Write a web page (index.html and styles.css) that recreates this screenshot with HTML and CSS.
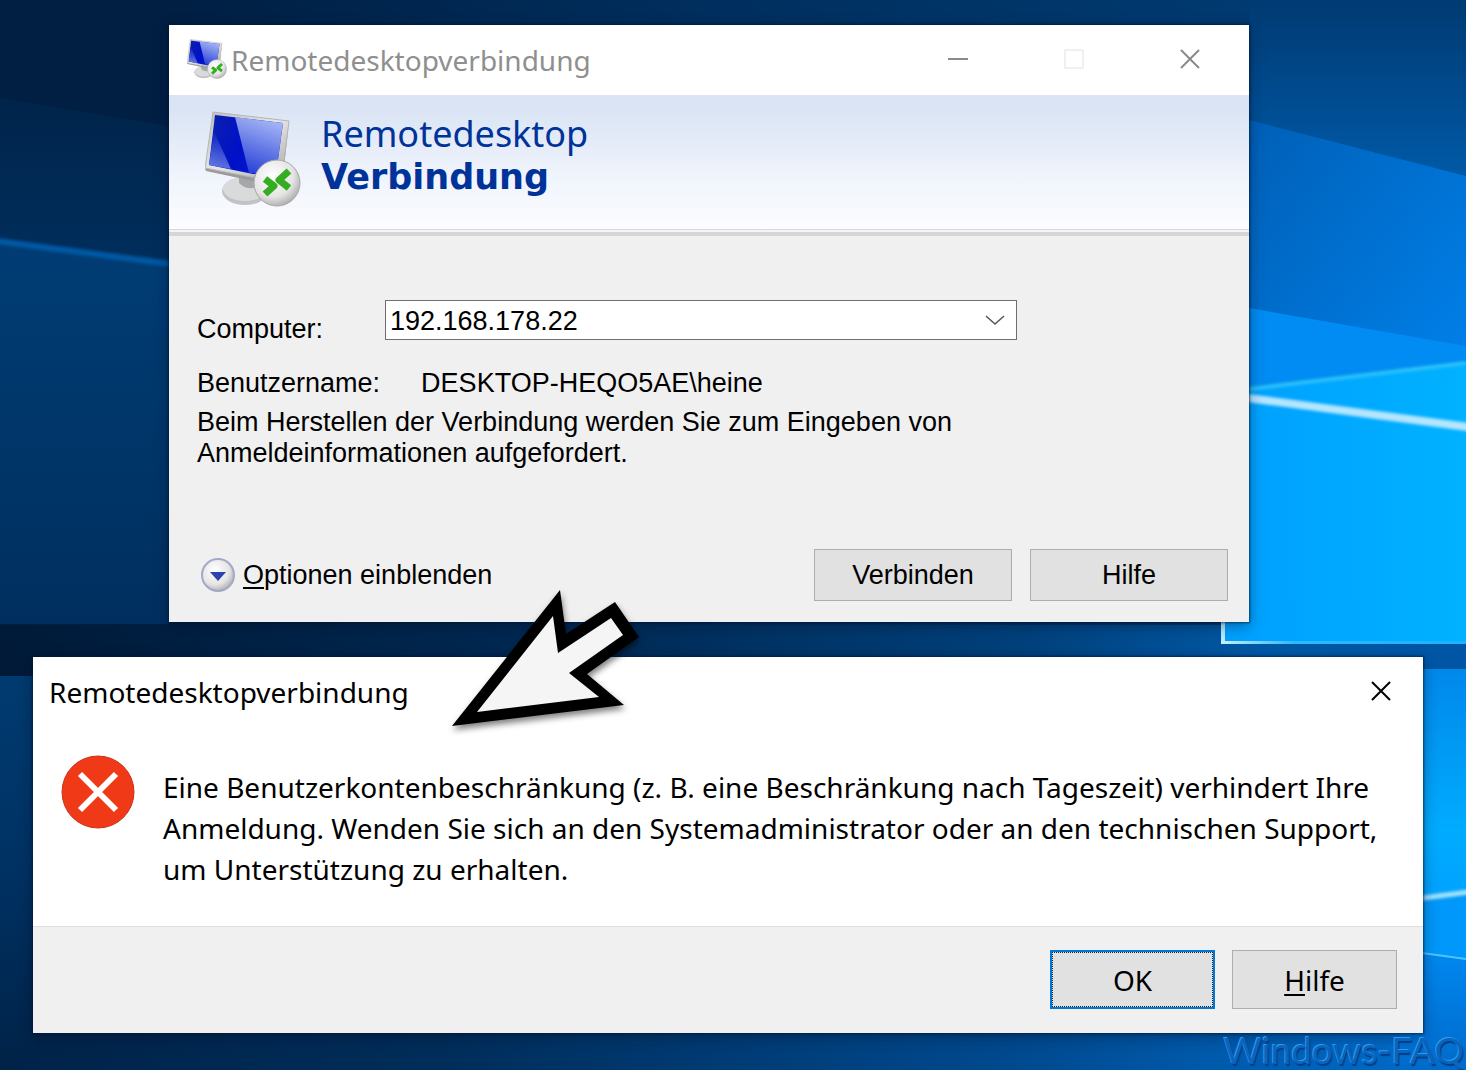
FILE: index.html
```html
<!DOCTYPE html>
<html lang="de">

<head>
  <meta charset="UTF-8">
  <meta name="viewport" content="width=device-width, initial-scale=1.0">
  <title>Remotedesktopverbindung</title>
  <link rel="stylesheet" href="styles.css">
</head>

<body>
  <!-- desktop wallpaper -->
  <svg class="wallpaper" viewBox="0 0 1466 1070" preserveAspectRatio="none" aria-hidden="true">
    <defs>
      <filter id="soft" x="-10%" y="-50%" width="120%" height="200%">
        <feGaussianBlur stdDeviation="1.5" />
      </filter>
      <linearGradient id="sky" x1="0" y1="0" x2="1" y2="0">
        <stop offset="0" stop-color="#001f42" />
        <stop offset="0.12" stop-color="#001f43" />
        <stop offset="0.5" stop-color="#002f5f" />
        <stop offset="0.85" stop-color="#003a70" />
        <stop offset="1" stop-color="#004584" />
      </linearGradient>
      <linearGradient id="leftHaze" x1="0" y1="0" x2="0" y2="1">
        <stop offset="0" stop-color="#00244b" />
        <stop offset="1" stop-color="#002e5c" />
      </linearGradient>
      <linearGradient id="leftGlow" x1="0" y1="0" x2="0" y2="1">
        <stop offset="0" stop-color="#003d74" />
        <stop offset="1" stop-color="#002f5f" />
      </linearGradient>
      <linearGradient id="rightSky" x1="0" y1="0" x2="0" y2="1">
        <stop offset="0" stop-color="#003a72" />
        <stop offset="1" stop-color="#005cab" />
      </linearGradient>
      <linearGradient id="rightGlow" x1="0" y1="0" x2="1" y2="1">
        <stop offset="0" stop-color="#005fb6" />
        <stop offset="1" stop-color="#0082ec" />
      </linearGradient>
      <linearGradient id="pane" x1="0" y1="0" x2="1" y2="0">
        <stop offset="0" stop-color="#009fff" />
        <stop offset="1" stop-color="#00b2ff" />
      </linearGradient>
      <linearGradient id="paneEdge" x1="0" y1="0" x2="1" y2="0">
        <stop offset="0" stop-color="#c8f0ff" />
        <stop offset="0.3" stop-color="#2fb8ff" />
        <stop offset="1" stop-color="#1cb2ff" />
      </linearGradient>
      <linearGradient id="band" x1="0" y1="0" x2="1" y2="0">
        <stop offset="0" stop-color="#001a38" />
        <stop offset="0.4" stop-color="#002a55" />
        <stop offset="0.7" stop-color="#00417c" />
        <stop offset="0.86" stop-color="#0059a6" />
        <stop offset="1" stop-color="#0056a4" />
      </linearGradient>
      <linearGradient id="floor" x1="0" y1="0" x2="1" y2="0">
        <stop offset="0" stop-color="#002348" />
        <stop offset="0.3" stop-color="#002d5a" />
        <stop offset="0.7" stop-color="#004a90" />
        <stop offset="1" stop-color="#006fd0" />
      </linearGradient>
      <linearGradient id="floorLeft" x1="0" y1="0" x2="0" y2="1">
        <stop offset="0" stop-color="#003b70" />
        <stop offset="0.5" stop-color="#003264" />
        <stop offset="1" stop-color="#00244a" />
      </linearGradient>
      <linearGradient id="paneLow" x1="0" y1="0" x2="0" y2="1">
        <stop offset="0" stop-color="#0088ea" />
        <stop offset="0.7" stop-color="#00acff" />
        <stop offset="1" stop-color="#00a2ff" />
      </linearGradient>
      <linearGradient id="floorRight" x1="0" y1="0" x2="0" y2="1">
        <stop offset="0" stop-color="#0088f0" />
        <stop offset="1" stop-color="#006aca" />
      </linearGradient>
    </defs>
    <rect width="1466" height="1070" fill="url(#sky)" />
    <path d="M0 98 L169 126 V262 L0 240 Z" fill="url(#leftHaze)" />
    <path d="M0 240 L169 264 V624 H0 Z" fill="url(#leftGlow)" />
    <path d="M-10 240 L179 265" stroke="#0059a4" stroke-width="6" filter="url(#soft)" />
    <rect x="1249" width="217" height="190" fill="url(#rightSky)" />
    <path d="M1249 120 L1466 176 V370 L1249 392 Z" fill="url(#rightGlow)" />
    <path d="M1249 308 L1466 346 V370 L1249 392 Z" fill="#008cf2" />
    <path d="M1220 392 L1466 362 V642 H1222 Z" fill="url(#pane)" />
    <path d="M1249 389 L1466 363" stroke="#2cc0fa" stroke-width="4" filter="url(#soft)" />
    <path d="M1240 397 L1476 428" stroke="#b4e6ff" stroke-width="8" filter="url(#soft)" />
    <rect y="625" width="1466" height="52" fill="url(#band)" />
    <rect x="1222" y="600" width="244" height="42" fill="url(#pane)" />
    <path d="M1223 600 V642" stroke="#b8ecff" stroke-width="4" />
    <rect x="1221" y="641" width="245" height="3" fill="url(#paneEdge)" />
    <rect y="676" width="1466" height="394" fill="url(#floor)" />
    <rect y="676" width="34" height="374" fill="url(#floorLeft)" />
    <path d="M1400 669 H1466 V892 L1400 900 Z" fill="url(#paneLow)" />
    <path d="M1400 898 L1466 892 V959 L1400 950 Z" fill="#0098fa" />
    <path d="M1400 950 L1466 959 V1070 H1400 Z" fill="url(#floorRight)" />
    <path d="M1400 901 L1476 891" stroke="#a4e4ff" stroke-width="5" filter="url(#soft)" />
    <path d="M1400 950 L1466 959" stroke="#4cc4ff" stroke-width="2" />
  </svg>

  <!-- monitor with the connection badge, used twice -->
  <svg class="symbols" aria-hidden="true">
    <defs>
      <linearGradient id="screen" x1="0" y1="0.3" x2="1" y2="0.6">
        <stop offset="0" stop-color="#0a1fb0" />
        <stop offset="0.45" stop-color="#0010c8" />
        <stop offset="1" stop-color="#0a1ed0" />
      </linearGradient>
      <linearGradient id="shine" x1="0.7" y1="0" x2="0.4" y2="1">
        <stop offset="0" stop-color="#a9b9f6" />
        <stop offset="1" stop-color="#2a42d8" />
      </linearGradient>
      <linearGradient id="corner" x1="0.2" y1="0" x2="0" y2="1">
        <stop offset="0" stop-color="#0a20c4" />
        <stop offset="1" stop-color="#6a80e4" />
      </linearGradient>
      <linearGradient id="frame" x1="0" y1="0" x2="1" y2="1">
        <stop offset="0" stop-color="#bcbcbc" />
        <stop offset="0.5" stop-color="#e6e6e6" />
        <stop offset="1" stop-color="#a8a8a8" />
      </linearGradient>
      <radialGradient id="ball" cx="0.4" cy="0.35" r="0.7">
        <stop offset="0" stop-color="#ffffff" />
        <stop offset="0.65" stop-color="#e4e4e4" />
        <stop offset="1" stop-color="#a9a9a9" />
      </radialGradient>
      <symbol id="monitor" viewBox="0 0 96 96">
        <ellipse cx="40" cy="80" rx="23" ry="14" fill="#c0c2c4" />
        <ellipse cx="40" cy="78" rx="22" ry="12" fill="#d8dadb" />
        <path d="M34 60 L52 64 L52 76 Q42 80 34 72 Z" fill="#a5a7a9" />
        <path d="M84 10 L76 60 L46 66 L0 57 L1 60 L48 70 L78 66 Z" fill="#9a9a9a" />
        <path d="M8 1 L84 10 L77 66 L46 66 L0 57 Z" fill="url(#frame)" stroke="#b5b5b5" />
        <path d="M10 4 L78 12 L71 63 L48 63 L4 54 Z" fill="url(#screen)" />
        <path d="M30 6 L78 12 L71 63 L44 62 Z" fill="url(#shine)" />
        <path d="M9 20 L26 58 L4 54 Z" fill="url(#corner)" />
        <circle cx="72" cy="72" r="23" fill="url(#ball)" stroke="#a8a8a8" stroke-width="1" />
        <path d="M60 68 L69 75 L60 83" fill="none" stroke="#35ad22" stroke-width="7" stroke-linejoin="round" />
        <path d="M84 60 L74 69 L84 77" fill="none" stroke="#35ad22" stroke-width="7" stroke-linejoin="round" />
      </symbol>
    </defs>
  </svg>

  <main class="desktop">
    <section class="window rdpWindow">
      <header class="titleBar">
        <svg class="titleIcon" aria-hidden="true"><use href="#monitor" /></svg>
        <h1 class="titleText">Remotedesktopverbindung</h1>
        <div class="windowControls">
          <button class="controlBtn" type="button" aria-label="Minimieren">
            <svg width="20" height="20"><path d="M0 10 H20" stroke="#8a8a8a" stroke-width="2" /></svg>
          </button>
          <button class="controlBtn" type="button" aria-label="Maximieren" disabled>
            <svg width="20" height="20"><rect x="1" y="1" width="18" height="18" fill="none" stroke="#e2e2e2" stroke-width="1" /></svg>
          </button>
          <button class="controlBtn" type="button" aria-label="Schließen">
            <svg width="20" height="20"><path d="M1 1 L19 19 M19 1 L1 19" stroke="#8a8a8a" stroke-width="2" /></svg>
          </button>
        </div>
      </header>

      <div class="banner">
        <svg class="bannerIcon" aria-hidden="true"><use href="#monitor" /></svg>
        <p class="bannerText">Remotedesktop<br><strong>Verbindung</strong></p>
      </div>

      <form class="rdpForm">
        <div class="computerRow">
          <label for="computer">Computer:</label>
          <div class="comboBox">
            <select id="computer" name="computer">
              <option>192.168.178.22</option>
            </select>
            <svg class="comboArrow" width="20" height="12"><path d="M1 2 L10 10 L19 2" fill="none" stroke="#555" stroke-width="1.5" /></svg>
          </div>
        </div>
        <div class="userRow">
          <span>Benutzername:</span>
          <span>DESKTOP-HEQO5AE\heine</span>
        </div>
        <p class="hint">Beim Herstellen der Verbindung werden Sie zum Eingeben von<br>Anmeldeinformationen aufgefordert.</p>

        <div class="rdpActions">
          <button class="optionsBtn" type="button">
            <svg width="36" height="36" viewBox="0 0 36 36" aria-hidden="true">
              <circle cx="18" cy="18" r="16" fill="url(#ball)" stroke="#a3a9c6" stroke-width="2" />
              <path d="M10 15 H26 L18 24 Z" fill="#2c42ae" />
            </svg>
            <span><u>O</u>ptionen einblenden</span>
          </button>
          <button class="btn" type="button">Verbinden</button>
          <button class="btn" type="button">Hilfe</button>
        </div>
      </form>
    </section>

    <section class="window errorWindow" role="alertdialog" aria-labelledby="errorTitle">
      <header class="errorTitleBar">
        <h2 class="titleText" id="errorTitle">Remotedesktopverbindung</h2>
        <button class="controlBtn" type="button" aria-label="Schließen">
          <svg width="20" height="20"><path d="M1 1 L19 19 M19 1 L1 19" stroke="#000" stroke-width="2" /></svg>
        </button>
      </header>
      <div class="errorBody">
        <svg class="errorIcon" viewBox="0 0 74 74" aria-hidden="true">
          <circle cx="37" cy="37" r="36" fill="#f03a17" stroke="#c8321a" />
          <path d="M19 19 L55 55 M55 19 L19 55" stroke="#fff" stroke-width="6" />
        </svg>
        <p class="errorText">Eine Benutzerkontenbeschränkung (z. B. eine Beschränkung nach Tageszeit) verhindert Ihre<br>Anmeldung. Wenden Sie sich an den Systemadministrator oder an den technischen Support,<br>um Unterstützung zu erhalten.</p>
      </div>
      <footer class="errorActions">
        <button class="btn btnDefault" type="button">OK</button>
        <button class="btn" type="button"><u>H</u>ilfe</button>
      </footer>
      <!-- arrow pointing at the message -->
      <svg class="pointer" viewBox="0 0 200 150" aria-hidden="true">
        <path d="M12 146 L120 10 L126 54 L175 22 L199 57 L147 94 L184 125 Z" fill="#000" />
        <path d="M37 132 L113 36 L118 73 L171 38 L183 55 L129 93 L159 117 Z" fill="#f5f5f5" />
      </svg>
    </section>
  </main>

  <div class="watermark">Windows-FAQ</div>
</body>

</html>
```

FILE: styles.css
```css
* {
  box-sizing: border-box;
}

body {
  margin: 0;
  min-height: 100vh;
  position: relative;
  overflow: hidden;
  background: #002a56;
  color: #000;
  font-family: "Liberation Sans", Arial, sans-serif;
  font-size: 27px;
}

h1,
h2,
p {
  margin: 0;
}

button {
  font: inherit;
  color: inherit;
}

.symbols {
  position: absolute;
  width: 0;
  height: 0;
}

.wallpaper {
  position: absolute;
  top: 0;
  left: 0;
  width: 100%;
  height: 100%;
}

.desktop {
  position: relative;
  padding: 25px 43px 37px 33px;
}

.window {
  background: #fff;
  box-shadow: 0 0 2px 1px rgba(0, 20, 50, 0.6), 0 4px 14px rgba(0, 15, 40, 0.4);
}

.titleText {
  padding-top: 2px;
  font-family: "Noto Sans", "Segoe UI", sans-serif;
  font-size: 28px;
  font-weight: 400;
  line-height: 40px;
}

.controlBtn {
  display: flex;
  align-items: center;
  justify-content: center;
  width: 46px;
  height: 40px;
  padding: 0;
  border: none;
  background: none;
}

/* Connection window */
.rdpWindow {
  margin: 0 174px 0 136px;
  background: #f0f0f0;
}

.titleBar {
  display: flex;
  align-items: center;
  height: 70px;
  padding: 0 36px 2px 18px;
  background: #fff;
  color: #8f8f8f;
}

.titleIcon {
  width: 40px;
  height: 40px;
  margin-right: 4px;
}

.windowControls {
  display: flex;
  gap: 70px;
  margin-left: auto;
}

.banner {
  display: flex;
  gap: 20px;
  height: 141px;
  padding: 16px 36px;
  background: linear-gradient(#dae4f4 10%, #f0f4fc 60%, #fcfdff);
  border-bottom: 4px solid #d6d6d6;
  box-shadow: inset 0 -2px 0 #f4f4f4, inset 0 -3px 0 #d8d8d8;
}

.bannerIcon {
  width: 96px;
  height: 96px;
}

.bannerText {
  padding-top: 2px;
  color: #003399;
  font-family: "Noto Sans", Tahoma, sans-serif;
  font-size: 36px;
  line-height: 42px;
}

.bannerText strong {
  font-family: "DejaVu Sans", Tahoma, sans-serif;
  font-size: 35px;
}

.rdpForm {
  padding: 64px 21px 21px 28px;
}

.computerRow {
  display: flex;
  align-items: flex-start;
  gap: 60px;
  height: 46px;
}

.computerRow label {
  width: 128px;
  padding-top: 12px;
  line-height: 34px;
}

.comboBox {
  position: relative;
  width: 632px;
}

.comboBox select {
  display: block;
  width: 100%;
  height: 40px;
  padding: 2px 4px 0;
  appearance: none;
  background: #fff;
  border: 1px solid #6f6f6f;
  border-radius: 0;
  color: #000;
  font: inherit;
}

.comboArrow {
  position: absolute;
  top: 14px;
  right: 12px;
  pointer-events: none;
}

.userRow {
  display: flex;
  gap: 41px;
  margin-top: 22px;
  line-height: 31px;
}

.hint {
  margin-top: 8px;
  line-height: 31px;
}

.rdpActions {
  display: flex;
  align-items: center;
  gap: 18px;
  margin-top: 80px;
}

.optionsBtn {
  display: flex;
  align-items: center;
  gap: 7px;
  margin-right: auto;
  padding: 0 3px;
  border: none;
  background: none;
}

u {
  text-decoration-thickness: 2px;
  text-underline-offset: 3px;
}

.btn {
  width: 198px;
  height: 52px;
  border: 1px solid #adadad;
  background: #e1e1e1;
}

/* Error dialog */
.errorWindow {
  position: relative;
  margin-top: 35px;
  font-family: "Noto Sans", "Segoe UI", sans-serif;
  font-size: 28px;
}

.errorTitleBar {
  display: flex;
  align-items: center;
  justify-content: space-between;
  height: 70px;
  padding: 0 19px 2px 16px;
}

.errorBody {
  display: flex;
  align-items: flex-start;
  gap: 28px;
  padding: 28px 28px 36px;
}

.errorIcon {
  flex: none;
  width: 74px;
  height: 74px;
}

.errorText {
  padding-top: 12px;
  line-height: 41px;
  white-space: nowrap;
}

.errorActions {
  display: flex;
  justify-content: flex-end;
  gap: 17px;
  padding: 23px 26px 24px;
  border-top: 1px solid #dfdfdf;
  background: #f0f0f0;
}

.errorActions .btn {
  width: 165px;
  height: 59px;
}

.errorActions .btnDefault {
  border: 2px solid #0078d7;
  outline: 1px dotted #222;
  outline-offset: -3px;
}

.pointer {
  position: absolute;
  top: -77px;
  left: 407px;
  width: 200px;
  height: 150px;
  overflow: visible;
  filter: drop-shadow(1px 4px 3px rgba(0, 0, 0, 0.5));
}

.watermark {
  position: absolute;
  right: 2px;
  bottom: 0;
  color: #0a64bd;
  font-family: Lato, sans-serif;
  font-size: 37px;
  line-height: 40px;
  text-shadow: -1px -1px 0 #2f9bf0, 1px 2px 1px #003f86;
}
```
